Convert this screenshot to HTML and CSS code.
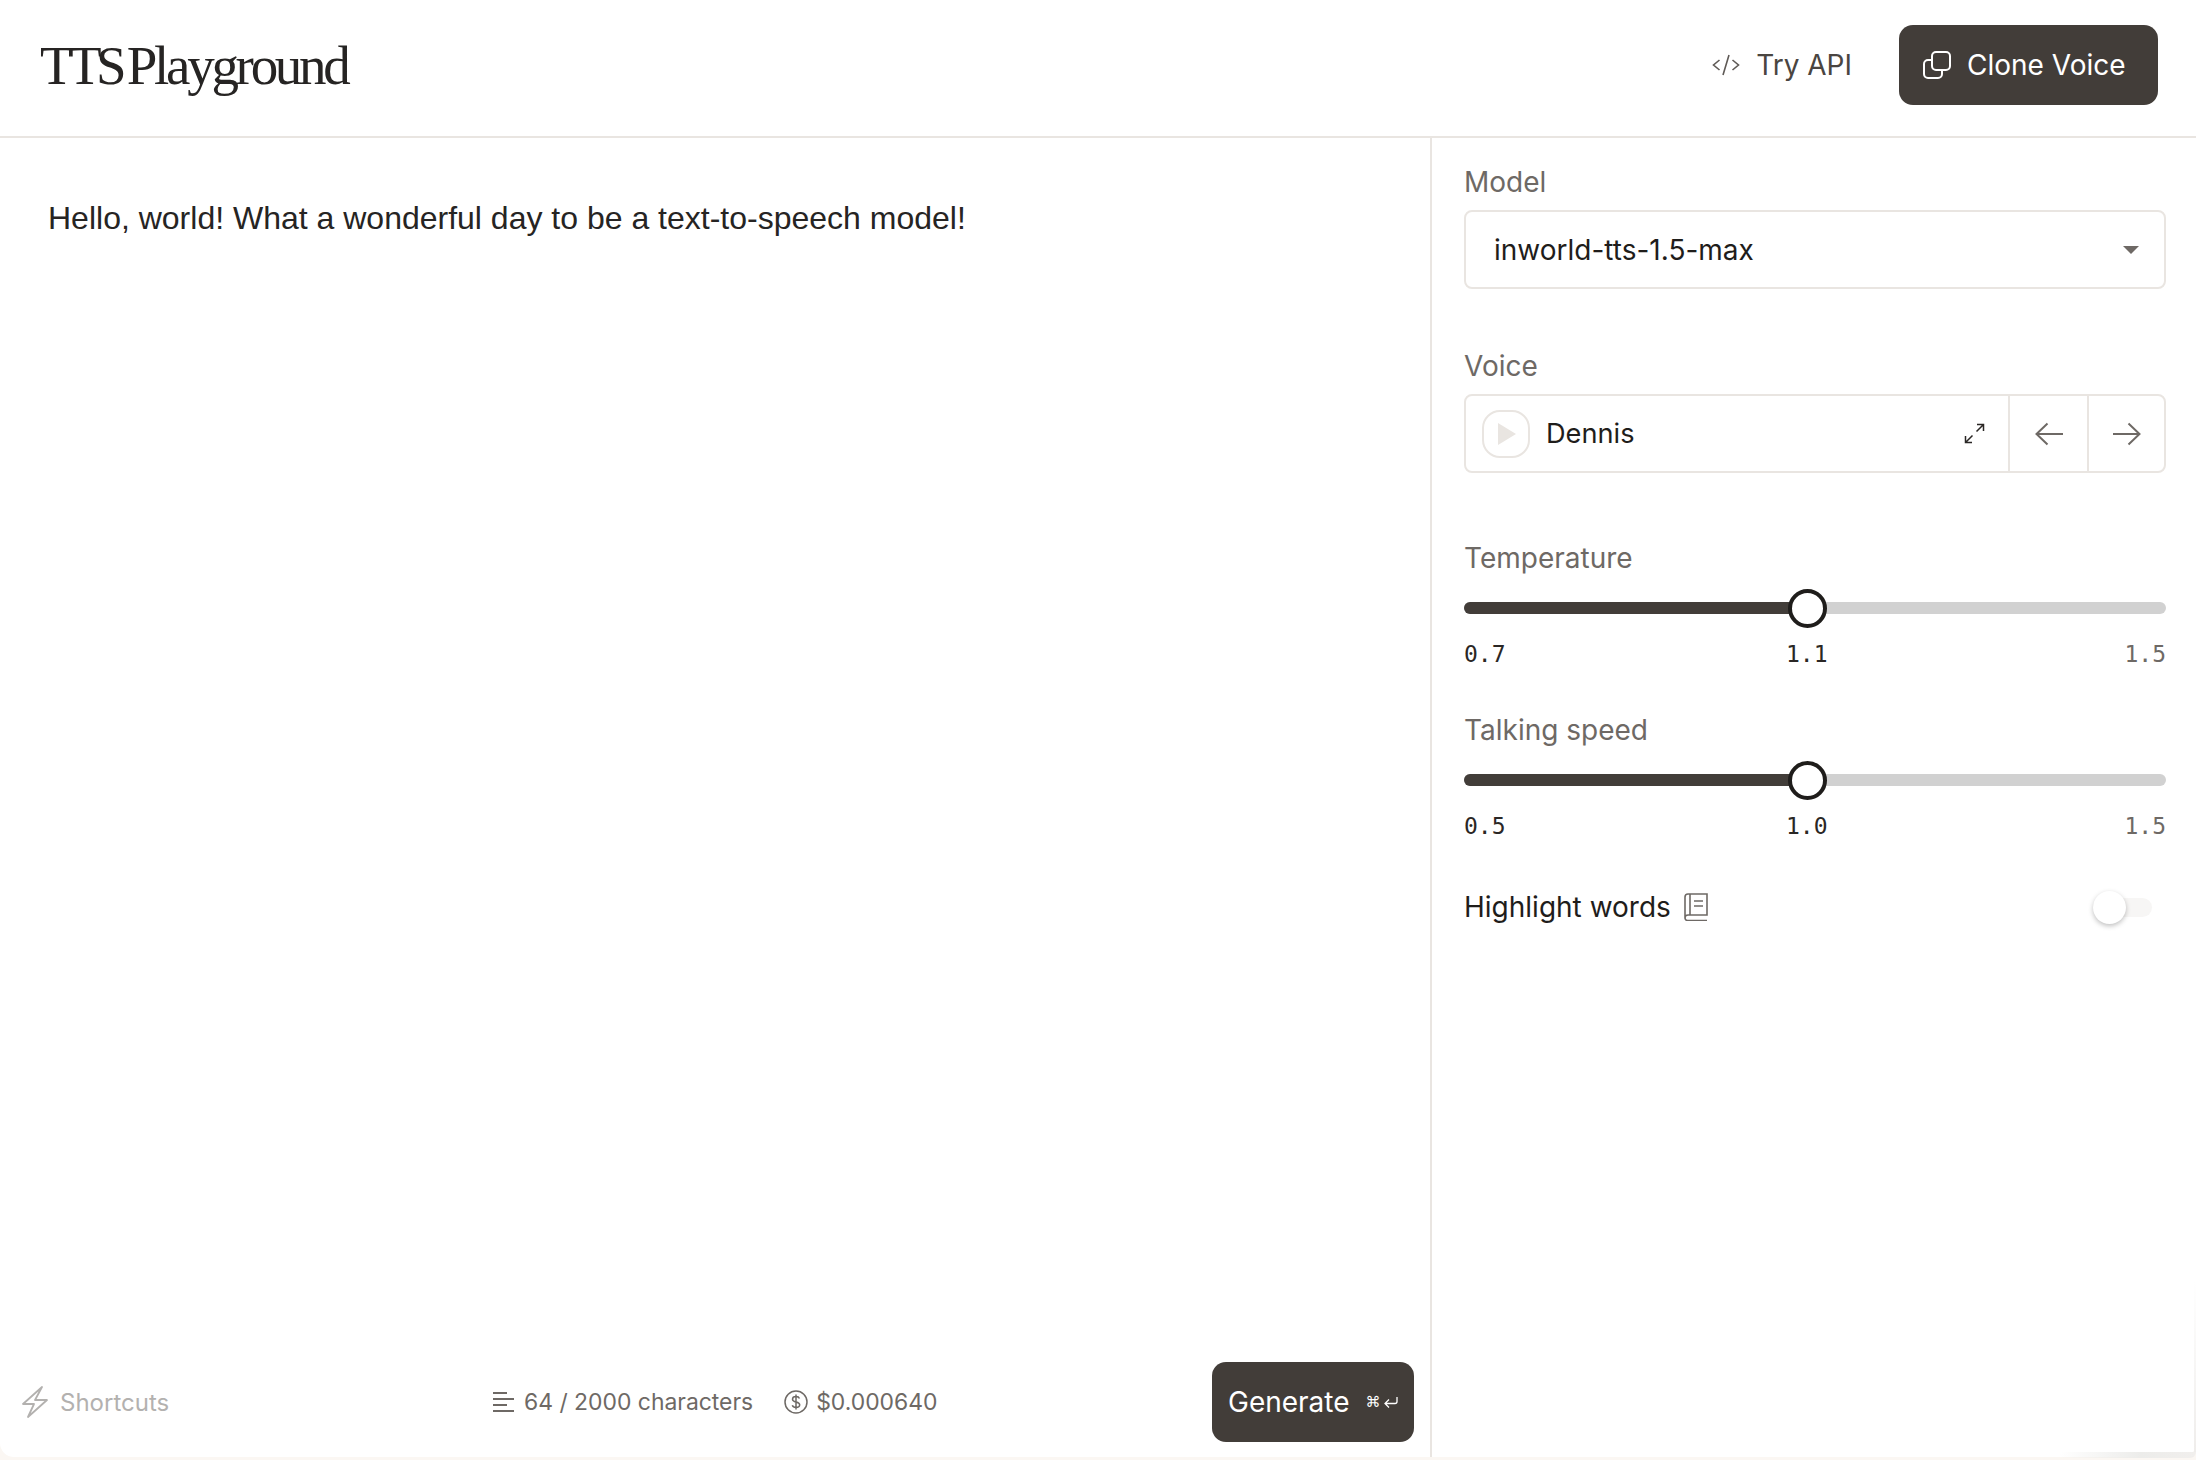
FILE: index.html
```html
<!DOCTYPE html>
<html lang="en">
<head>
    <meta charset="UTF-8">
    <meta name="viewport" content="width=device-width, initial-scale=1.0">
    <title>TTS Playground</title>
    <link rel="stylesheet" href="styles.css">
</head>
<body>
    <div class="app">
        <div class="header">
            <h1><span class="title-tts">TTS</span> Playground</h1>
            <div class="header-actions">
                <button class="try-api">
                    <svg width="28" height="24" viewBox="0 0 28 24" fill="none" stroke="#5f5a56" stroke-width="1.600"><path d="M7.500 7 1.500 12l6 5M20.500 7l6 5-6 5M17 2l-6 20"/></svg>
                    Try API
                </button>
                <button class="dark-btn clone-btn">
                    <svg width="28" height="28" viewBox="0 0 28 28" fill="none" stroke="#fff" stroke-width="2"><rect x="9" y="1" width="18" height="18" rx="4"/><path d="M9 9H5a4 4 0 0 0-4 4v10a4 4 0 0 0 4 4h10a4 4 0 0 0 4-4v-4"/></svg>
                    Clone Voice
                </button>
            </div>
        </div>

        <div class="content">
            <div class="editor">
                <div class="editor-text">Hello, world! What a wonderful day to be a text-to-speech model!</div>
                <div class="editor-footer">
                    <div class="shortcuts">
                        <svg width="26" height="32" viewBox="0 0 26 32" fill="none" stroke="#b3b1af" stroke-width="1.800" stroke-linejoin="round"><path d="M20 1 1 18h11L6 31l19-17H13z"/></svg>
                        Shortcuts
                    </div>
                    <div class="stats">
                        <div class="stat">
                            <svg width="22" height="22" viewBox="0 0 22 22" stroke="#6e6965" stroke-width="1.800"><path d="M0 2h14M0 8h21M0 14h14M0 20h21"/></svg>
                            64 / 2000 characters
                        </div>
                        <div class="stat stat-cost">
                            <svg width="24" height="24" viewBox="0 0 24 24" fill="none" stroke="#6e6965" stroke-width="1.500"><circle cx="12" cy="12" r="11"/><path d="M15.500 8.500c-.5-1.300-2-2-3.500-2-2 0-3.500 1-3.500 2.700 0 3.800 7.200 1.800 7.200 5.600 0 1.700-1.700 2.700-3.700 2.700-1.700 0-3.200-.8-3.700-2.200M12 4.500v15"/></svg>
                            $0.000640
                        </div>
                    </div>
                    <button class="dark-btn generate-btn">
                        Generate
                        <span class="kbd">⌘</span>
                        <svg width="14" height="13" viewBox="0 0 14 13" fill="none" stroke="#fff" stroke-width="1.300"><path d="M13 1v4.500a2 2 0 0 1-2 2H1.500M5 3.500l-4 4 4 4"/></svg>
                    </button>
                </div>
            </div>

            <div class="sidebar">
                <div class="field field-model">
                    <label>Model</label>
                    <div class="select-box">
                        <span>inworld-tts-1.5-max</span>
                        <span class="caret"></span>
                    </div>
                </div>

                <div class="field field-voice">
                    <label>Voice</label>
                    <div class="voice-box">
                        <div class="voice-main">
                            <span class="play"><span class="play-tri"></span></span>
                            <span class="voice-name">Dennis</span>
                            <svg width="21" height="21" viewBox="0 0 21 21" fill="none" stroke="#2a2725" stroke-width="1.500"><path d="M12.500 8.500 19.500 1.500M13 1.500h6.500V8M8.500 12.500l-7 7M1.500 13v6.500H8"/></svg>
                        </div>
                        <div class="voice-nav">
                            <svg width="28" height="24" viewBox="0 0 28 24" fill="none" stroke="#6e6965" stroke-width="2"><path d="M28 12H2M12.500 1.500 1.500 12l11 10.500"/></svg>
                        </div>
                        <div class="voice-nav">
                            <svg width="28" height="24" viewBox="0 0 28 24" fill="none" stroke="#6e6965" stroke-width="2"><path d="M0 12h26M15.500 1.500 26.500 12l-11 10.500"/></svg>
                        </div>
                    </div>
                </div>

                <div class="field field-slider">
                    <label>Temperature</label>
                    <div class="slider">
                        <div class="slider-fill"></div>
                        <div class="slider-thumb"></div>
                    </div>
                    <div class="slider-scale">
                        <span>0.7</span><span>1.1</span><span class="max">1.5</span>
                    </div>
                </div>

                <div class="field field-slider speed">
                    <label>Talking speed</label>
                    <div class="slider">
                        <div class="slider-fill"></div>
                        <div class="slider-thumb"></div>
                    </div>
                    <div class="slider-scale">
                        <span>0.5</span><span>1.0</span><span class="max">1.5</span>
                    </div>
                </div>

                <div class="highlight-row">
                    <span>Highlight words</span>
                    <svg width="24" height="28" viewBox="0 0 24 28" fill="none" stroke="#6e6965" stroke-width="1.600"><path d="M1 25V4a3 3 0 0 1 3-3h19v21H4a3 3 0 0 0-3 3 2.500 2.500 0 0 0 2.500 2.500H23"/><path d="M6 1v21M10 8h9M10 13h9"/></svg>
                    <div class="toggle"><div class="toggle-knob"></div></div>
                </div>
            </div>
        </div>
    </div>
    <div class="edge-shade"></div>
    <div class="corner-shade"></div>
</body>
</html>
```

FILE: styles.css
```css
* {
    box-sizing: border-box;
}

body {
    margin: 0;
    height: 1460px;
    overflow: hidden;
    background-color: #fbf7f3;
    font-family: Inter, "Liberation Sans", sans-serif;
    color: #1f1d1b;
}

button {
    font-family: inherit;
    border: none;
    cursor: pointer;
}

label {
    display: block;
    font-size: 28px;
    line-height: 36px;
    color: #6e6965;
}

.app {
    width: 2196px;
    height: 1457px;
    background: #fff;
    border-radius: 0 0 14px 14px;
    display: flex;
    flex-direction: column;
}

.header {
    height: 138px;
    flex-shrink: 0;
    display: flex;
    justify-content: space-between;
    align-items: center;
    padding: 0 38px 6px 40px;
    border-bottom: 2px solid #e9e5e1;
}

.header h1 {
    margin: 0;
    font-family: "Liberation Serif", serif;
    font-weight: 400;
    font-size: 55px;
    letter-spacing: -3.300px;
    word-spacing: -4.600px;
    color: #262423;
}

.title-tts {
    letter-spacing: -5.600px;
}

.header-actions {
    display: flex;
    align-items: center;
    gap: 47px;
}

.try-api {
    background: none;
    display: flex;
    align-items: center;
    gap: 16px;
    font-size: 28px;
    color: #4a4541;
    padding: 0;
}

.dark-btn {
    background-color: #423d39;
    color: #fff;
    border-radius: 14px;
    height: 80px;
    display: flex;
    align-items: center;
    font-size: 28px;
}

.clone-btn {
    width: 259px;
    gap: 16px;
    padding: 0 0 0 24px;
}

.content {
    flex: 1;
    display: flex;
    min-height: 0;
}

.editor {
    width: 1432px;
    flex-shrink: 0;
    border-right: 2px solid #e9e5e1;
    display: flex;
    flex-direction: column;
    justify-content: space-between;
}

.editor-text {
    padding: 59px 48px;
    font-family: "Liberation Sans", Arial, sans-serif;
    font-size: 32px;
    line-height: 42px;
    color: #262423;
}

.editor-footer {
    display: flex;
    align-items: center;
    height: 80px;
    margin-bottom: 15px;
    padding: 0 16px 0 22px;
}

.shortcuts {
    display: flex;
    align-items: center;
    gap: 12px;
    width: 471px;
    font-size: 24px;
    color: #b3b1af;
}

.stats {
    display: flex;
    gap: 31px;
    font-size: 22.900px;
    color: #6e6965;
    flex: 1;
}

.stat {
    display: flex;
    align-items: center;
    gap: 9px;
}

.stat-cost {
    gap: 8px;
}

.generate-btn {
    width: 202px;
    padding: 0 0 0 16px;
    gap: 3px;
}

.kbd {
    font-family: "DejaVu Sans", sans-serif;
    font-size: 15px;
    margin-left: 13px;
}

.sidebar {
    flex: 1;
    padding: 26px 30px 0 32px;
    display: flex;
    flex-direction: column;
}

.field label {
    margin-bottom: 10px;
}

.select-box {
    height: 79px;
    border: 2px solid #e9e5e1;
    border-radius: 8px;
    display: flex;
    align-items: center;
    justify-content: space-between;
    padding: 0 25px 0 28px;
    font-size: 28px;
}

.caret {
    width: 0;
    height: 0;
    border-left: 8px solid transparent;
    border-right: 8px solid transparent;
    border-top: 8px solid #6e6965;
}

.field-voice {
    margin-top: 59px;
}

.voice-box {
    height: 79px;
    border: 2px solid #e9e5e1;
    border-radius: 8px;
    display: flex;
}

.voice-main {
    flex: 1;
    display: flex;
    align-items: center;
    padding: 0 23px 0 16px;
    border-right: 2px solid #e9e5e1;
}

.play {
    width: 48px;
    height: 48px;
    border: 2px solid #e9e5e1;
    border-radius: 18px;
    display: flex;
    align-items: center;
    justify-content: center;
}

.play-tri {
    width: 0;
    height: 0;
    margin-left: 2px;
    border-top: 11px solid transparent;
    border-bottom: 11px solid transparent;
    border-left: 18px solid #e9e5e1;
}

.voice-name {
    flex: 1;
    margin-left: 16px;
    font-size: 27.200px;
}

.voice-nav {
    width: 77px;
    display: flex;
    align-items: center;
    justify-content: center;
}

.voice-nav + .voice-nav {
    border-left: 2px solid #e9e5e1;
}

.field-slider {
    margin-top: 67px;
}

.field-slider.speed {
    margin-top: 44px;
}

.field-slider label {
    margin-bottom: 26px;
}

.slider {
    position: relative;
    height: 12px;
    background: #d1d1d1;
    border-radius: 6px;
}

.slider-fill {
    width: 48.900%;
    height: 100%;
    background: #423d39;
    border-radius: 6px 0 0 6px;
}

.slider-thumb {
    position: absolute;
    left: 48.900%;
    top: 50%;
    width: 39px;
    height: 39px;
    margin: -19.500px 0 0 -19.500px;
    background: #fff;
    border: 4px solid #1f1d1b;
    border-radius: 50%;
}

.slider-scale {
    display: grid;
    grid-template-columns: 322px auto 1fr;
    margin-top: 26px;
    font-family: "DejaVu Sans Mono", monospace;
    font-size: 23px;
    line-height: 28px;
    color: #2a2725;
}

.slider-scale .max {
    text-align: right;
    color: #6e6965;
}

.highlight-row {
    display: flex;
    align-items: center;
    margin-top: 50px;
    font-size: 28px;
    gap: 13px;
}

.toggle {
    position: relative;
    margin-left: auto;
    margin-right: 14px;
    width: 59px;
    height: 19px;
    background: #f7f6f5;
    border-radius: 10px;
}

.toggle-knob {
    position: absolute;
    left: 0;
    top: -7px;
    width: 33px;
    height: 33px;
    background: #fff;
    border-radius: 50%;
    box-shadow: 0 2px 5px rgba(0, 0, 0, 0.25);
}

.edge-shade {
    position: absolute;
    right: 0;
    top: 1280px;
    width: 2px;
    height: 172px;
    background: linear-gradient(180deg, rgba(238, 236, 234, 0), #efedeb);
}

.corner-shade {
    position: absolute;
    left: 2060px;
    top: 1452px;
    width: 136px;
    height: 6px;
    background: linear-gradient(90deg, rgba(233, 229, 225, 0), #ececea 60%, #f1efed);
    border-radius: 0 0 10px 0;
}
```
